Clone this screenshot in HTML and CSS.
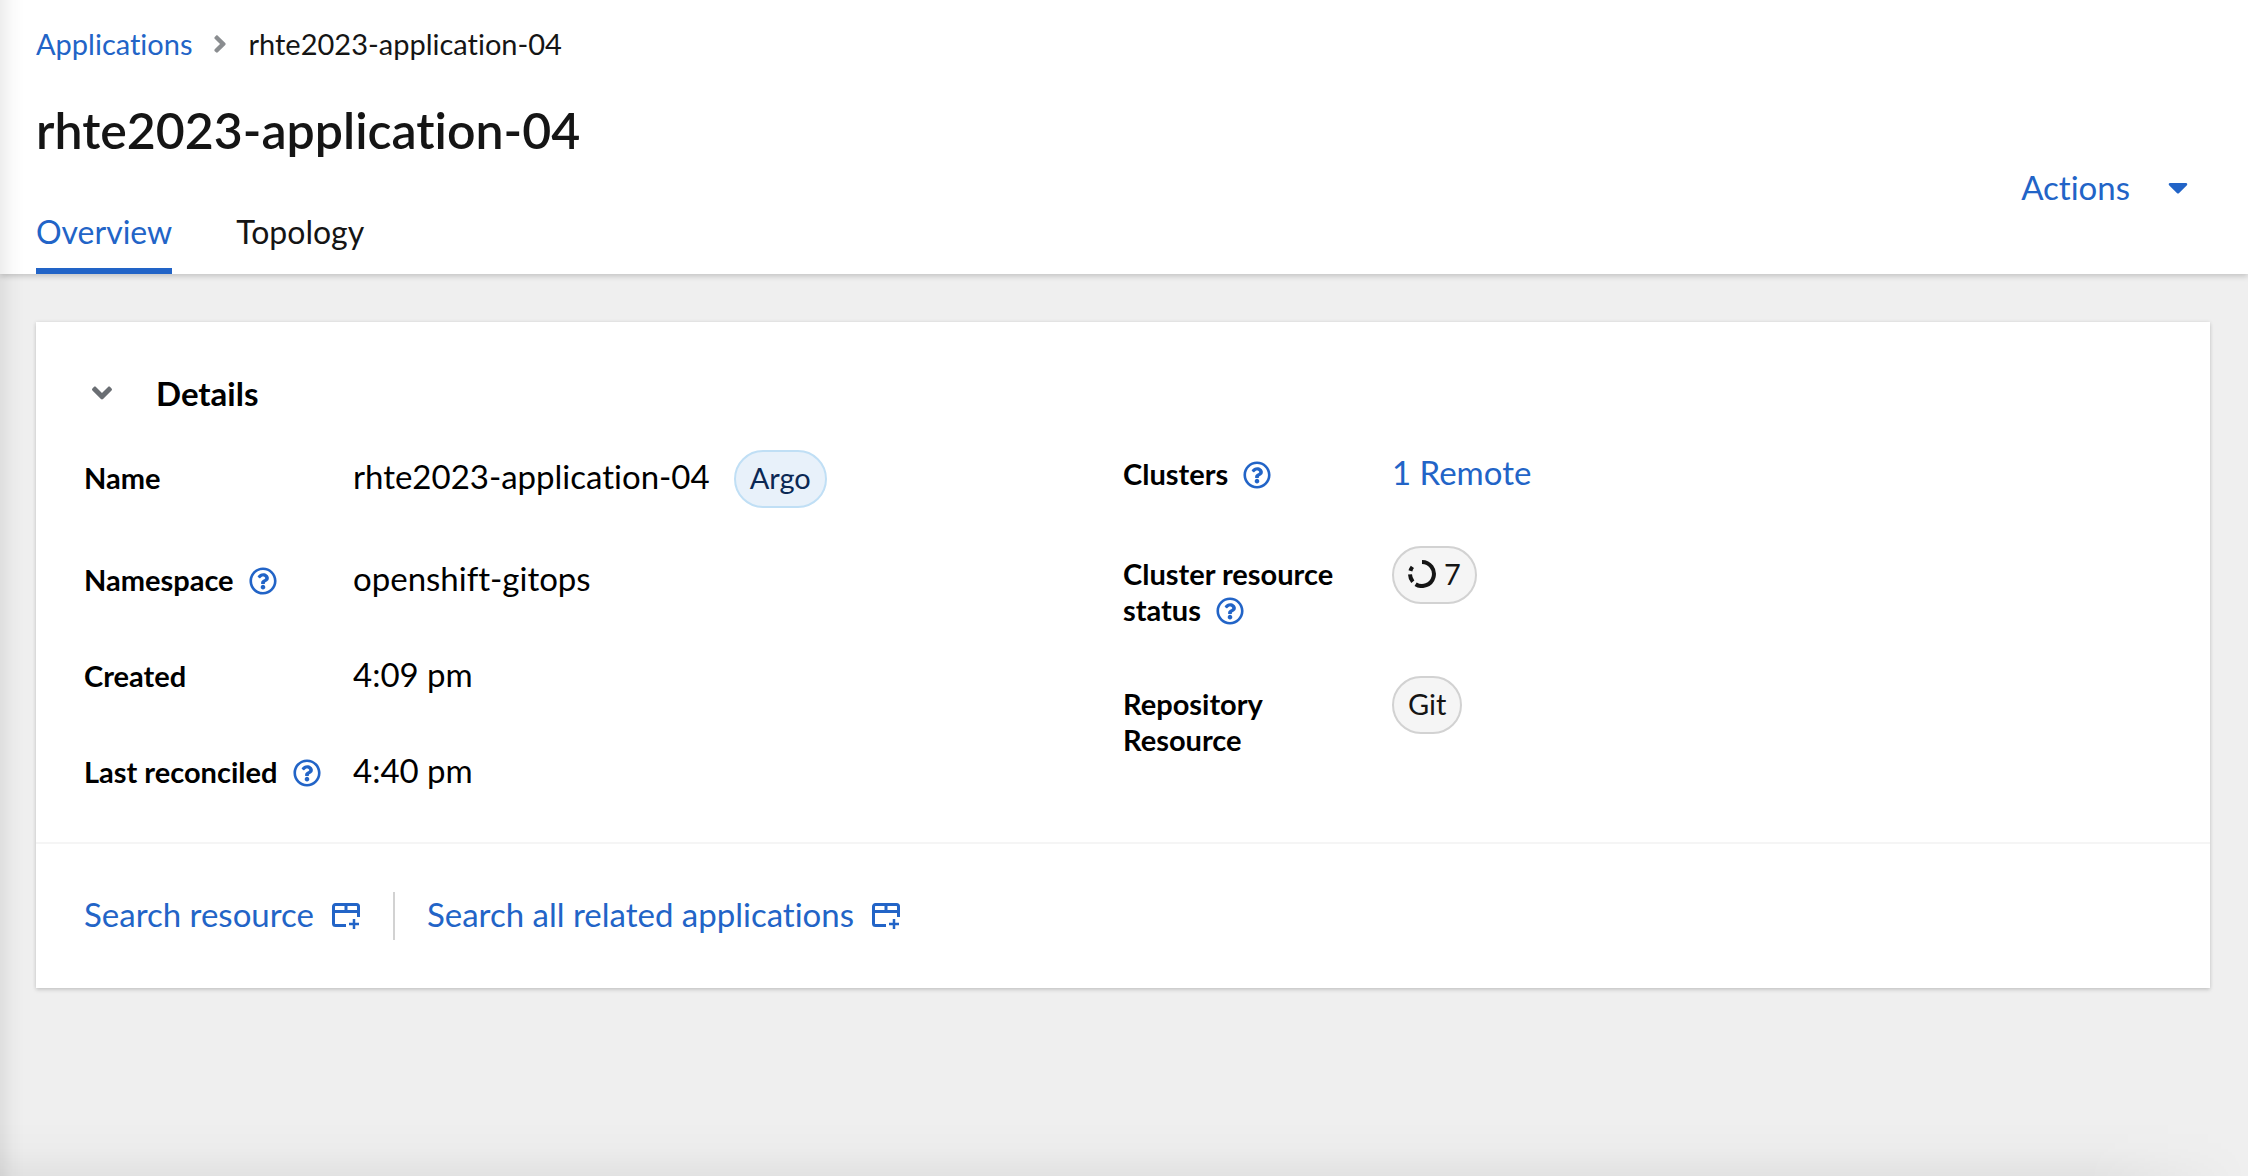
FILE: index.html
```
<!DOCTYPE html>
<html lang="en">
<head>
<meta charset="utf-8">
<meta name="viewport" content="width=device-width, initial-scale=1">
<title>rhte2023-application-04</title>
<link rel="stylesheet" href="styles.css">
</head>
<body>
<svg class="sprite" aria-hidden="true">
  <symbol id="help" viewBox="0 0 512 512"><path d="M256 8C119.043 8 8 119.083 8 256c0 136.997 111.043 248 248 248s248-111.003 248-248C504 119.083 392.957 8 256 8zm0 448c-110.532 0-200-89.431-200-200 0-110.495 89.472-200 200-200 110.491 0 200 89.471 200 200 0 110.53-89.431 200-200 200zm107.244-255.2c0 67.052-72.421 68.084-72.421 92.863V300c0 6.627-5.373 12-12 12h-45.647c-6.627 0-12-5.373-12-12v-8.659c0-35.745 27.1-50.034 47.579-61.516 17.561-9.845 28.324-16.541 28.324-29.579 0-17.246-21.999-28.693-39.784-28.693-23.189 0-33.894 10.977-48.942 29.969-4.057 5.12-11.46 6.071-16.666 2.124l-27.824-21.098c-5.107-3.872-6.251-11.066-2.644-16.363C184.846 131.491 214.94 112 261.794 112c49.071 0 101.45 38.304 101.45 88.8zM298 368c0 23.159-18.841 42-42 42s-42-18.841-42-42 18.841-42 42-42 42 18.841 42 42z"/></symbol>
  <symbol id="new-window" viewBox="0 0 28 28"><path d="M14 22.500H3.500a2 2 0 0 1-2-2V3.500a2 2 0 0 1 2-2h21a2 2 0 0 1 2 2V14M1.500 8.500h25M14 2v6" fill="none" stroke="currentColor" stroke-width="3"/><path d="M22 16v10M17 21h10" fill="none" stroke="currentColor" stroke-width="2.500"/></symbol>
</svg>

<header class="page-header">
  <nav class="breadcrumb" aria-label="Breadcrumb">
    <a href="#">Applications</a>
    <svg class="breadcrumb-divider" viewBox="0 0 256 512" aria-hidden="true"><path d="M224.3 273l-136 136c-9.4 9.4-24.6 9.4-33.9 0l-22.600-22.600c-9.400-9.400-9.400-24.600 0-33.900l96.400-96.400-96.400-96.400c-9.400-9.400-9.400-24.600 0-33.900L54.300 103c9.400-9.400 24.600-9.400 33.900 0l136 136c9.500 9.400 9.500 24.600.1 34z"/></svg>
    <span>rhte2023-application-04</span>
  </nav>
  <div class="header-main">
    <div>
      <h1 class="page-title">rhte2023-application-04</h1>
      <nav class="tabs" aria-label="Application views">
        <a class="tab tab-current" href="#" aria-current="page">Overview</a>
        <a class="tab" href="#">Topology</a>
      </nav>
    </div>
    <button class="actions" type="button">Actions
      <svg class="angle" viewBox="0 0 320 512" aria-hidden="true"><path d="M31.300 192h257.300c17.800 0 26.700 21.500 14.100 34.100L174.100 354.800c-7.800 7.800-20.500 7.800-28.300 0L17.200 226.100C4.600 213.500 13.400 192 31.300 192z"/></svg>
    </button>
  </div>
</header>

<main class="content">
  <section class="card">
    <h2 class="card-header">
      <button class="card-toggle" type="button" aria-expanded="true">
        <svg class="angle angle-muted" viewBox="0 0 320 512" aria-hidden="true"><path d="M143 352.300L7 216.300c-9.400-9.400-9.400-24.600 0-33.900l22.600-22.600c9.400-9.400 24.600-9.400 33.900 0l96.400 96.400 96.400-96.400c9.400-9.400 24.600-9.400 33.900 0l22.600 22.600c9.400 9.400 9.400 24.600 0 33.900l-136 136c-9.200 9.400-24.400 9.400-33.800 0z"/></svg>
        Details
      </button>
    </h2>
    <div class="card-body">
      <dl class="details">
        <div class="row"><dt>Name</dt><dd>rhte2023-application-04 <span class="pill pill-blue">Argo</span></dd></div>
        <div class="row"><dt>Namespace <button class="help" type="button" aria-label="About namespace"><svg><use href="#help"/></svg></button></dt><dd>openshift-gitops</dd></div>
        <div class="row"><dt>Created</dt><dd>4:09 pm</dd></div>
        <div class="row"><dt>Last reconciled <button class="help" type="button" aria-label="About last reconciled"><svg><use href="#help"/></svg></button></dt><dd>4:40 pm</dd></div>
      </dl>
      <dl class="details">
        <div class="row"><dt>Clusters <button class="help" type="button" aria-label="About clusters"><svg><use href="#help"/></svg></button></dt><dd><a href="#">1 Remote</a></dd></div>
        <div class="row"><dt>Cluster resource status <button class="help" type="button" aria-label="About cluster resource status"><svg><use href="#help"/></svg></button></dt><dd><button class="pill" type="button"><svg class="spinner" viewBox="0 0 28 28" aria-hidden="true"><path d="M14 2A12 12 0 1 1 7.600 24.200M4.800 21.700A12 12 0 0 1 2 14.400M2.400 10.900A12 12 0 0 1 4.400 6.900"/></svg>7</button></dd></div>
        <div class="row"><dt>Repository Resource</dt><dd><button class="pill" type="button">Git</button></dd></div>
      </dl>
    </div>
    <footer class="card-footer">
      <a class="search-link" href="#">Search resource <svg class="window-icon" aria-hidden="true"><use href="#new-window"/></svg></a>
      <a class="search-link" href="#">Search all related applications <svg class="window-icon" aria-hidden="true"><use href="#new-window"/></svg></a>
    </footer>
  </section>
</main>
</body>
</html>
```
FILE: styles.css
```
*,
*::before,
*::after {
  box-sizing: border-box;
}

body {
  margin: 0;
  min-height: 100vh;
  background: #efefef;
  color: #000;
  font: 400 33px/48px Lato, "Open Sans", sans-serif;
  font-variant-ligatures: none;
}

/* Shadows cast by the side navigation and the bottom edge of the window. */
body::before,
body::after {
  content: "";
  position: fixed;
  z-index: 1;
  left: 0;
  bottom: 0;
  pointer-events: none;
}

body::before {
  top: 0;
  width: 24px;
  background: linear-gradient(to right, rgba(0, 0, 0, 0.07), rgba(0, 0, 0, 0.02) 50%, transparent);
}

body::after {
  right: 0;
  height: 56px;
  background: linear-gradient(to top, rgba(0, 0, 0, 0.05), rgba(0, 0, 0, 0.01) 50%, transparent);
  mask-image: linear-gradient(to left, transparent, #000 160px);
}

a {
  color: #2264c7;
  text-decoration: none;
}

button {
  border: 0;
  padding: 0;
  background: none;
  color: inherit;
  font: inherit;
  font-variant-ligatures: none;
  cursor: pointer;
}

svg {
  fill: currentColor;
}

h1,
h2,
dl,
dd {
  margin: 0;
}

.sprite {
  position: absolute;
  width: 0;
  height: 0;
}

.page-header {
  position: relative;
  padding: 24px 36px 0;
  background: #fff;
  color: #151515;
  box-shadow: 0 2px 6px rgba(0, 0, 0, 0.2);
}

.breadcrumb {
  display: flex;
  align-items: center;
  font-size: 29px;
  line-height: 40px;
}

.breadcrumb-divider {
  width: 14px;
  height: 28px;
  margin: 0 22px 0 20px;
  color: #8a8d90;
}

.header-main {
  display: flex;
  align-items: center;
  justify-content: space-between;
  padding-top: 36px;
}

.page-title {
  font-size: 50px;
  font-weight: 600;
  line-height: 60px;
}

.tabs {
  display: flex;
  gap: 64px;
  padding-top: 36px;
}

.tab {
  padding: 16px 0;
  border-bottom: 6px solid transparent;
  font-size: 32px;
  line-height: 40px;
  color: #151515;
}

.tab-current {
  border-color: #2264c7;
  color: #2264c7;
}

.actions {
  display: flex;
  align-items: center;
  gap: 38px;
  padding-right: 24px;
  color: #2264c7;
}

.angle {
  width: 20px;
  height: 32px;
}

.angle-muted {
  color: #6a6e73;
}

.content {
  padding: 48px 38px 48px 36px;
}

.card {
  background: #fff;
  box-shadow: 0 2px 4px rgba(0, 0, 0, 0.14), 0 0 4px rgba(0, 0, 0, 0.08);
}

.card-header {
  padding: 48px 48px 34px 56px;
  font-size: 33px;
  font-weight: 700;
  line-height: 46px;
}

.card-toggle {
  display: flex;
  align-items: center;
  gap: 44px;
}

.card-body {
  display: grid;
  grid-template-columns: 1fr 1fr;
  padding: 0 48px 46px;
}

.details {
  display: flex;
  flex-direction: column;
  gap: 48px;
}

.row {
  display: grid;
  grid-template-columns: 244px 1fr;
  column-gap: 25px;
  align-items: baseline;
  align-content: start;
  min-height: 48px;
}

dt {
  font-size: 29px;
  font-weight: 700;
  line-height: 36px;
}

dd {
  display: flex;
  align-items: baseline;
  gap: 24px;
  line-height: 44px;
}

.help {
  margin-left: 8px;
  line-height: 28px;
  color: #2264c7;
  vertical-align: -4px;
}

.help svg {
  display: block;
  width: 28px;
  height: 28px;
}

.pill {
  display: flex;
  align-items: baseline;
  gap: 8px;
  padding: 6px 14px 8px;
  border: 2px solid #d2d2d2;
  border-radius: 30px;
  background: #f5f5f5;
  color: #151515;
  font-size: 29px;
  line-height: 40px;
}

.pill-blue {
  border-color: #c0dff5;
  background: #e8f1fa;
  color: #0b2854;
}

.spinner {
  width: 28px;
  height: 28px;
  align-self: center;
  fill: none;
  stroke: currentColor;
  stroke-width: 4;
}

.card-footer {
  display: flex;
  padding: 48px;
  border-top: 2px solid #f5f5f5;
}

.search-link {
  display: flex;
  align-items: center;
  gap: 18px;
  padding-bottom: 4px;
  line-height: 44px;
}

.search-link + .search-link {
  margin-left: 33px;
  padding-left: 32px;
  border-left: 2px solid #d2d2d2;
}

.window-icon {
  width: 28px;
  height: 28px;
  margin-top: 6px;
}
```
